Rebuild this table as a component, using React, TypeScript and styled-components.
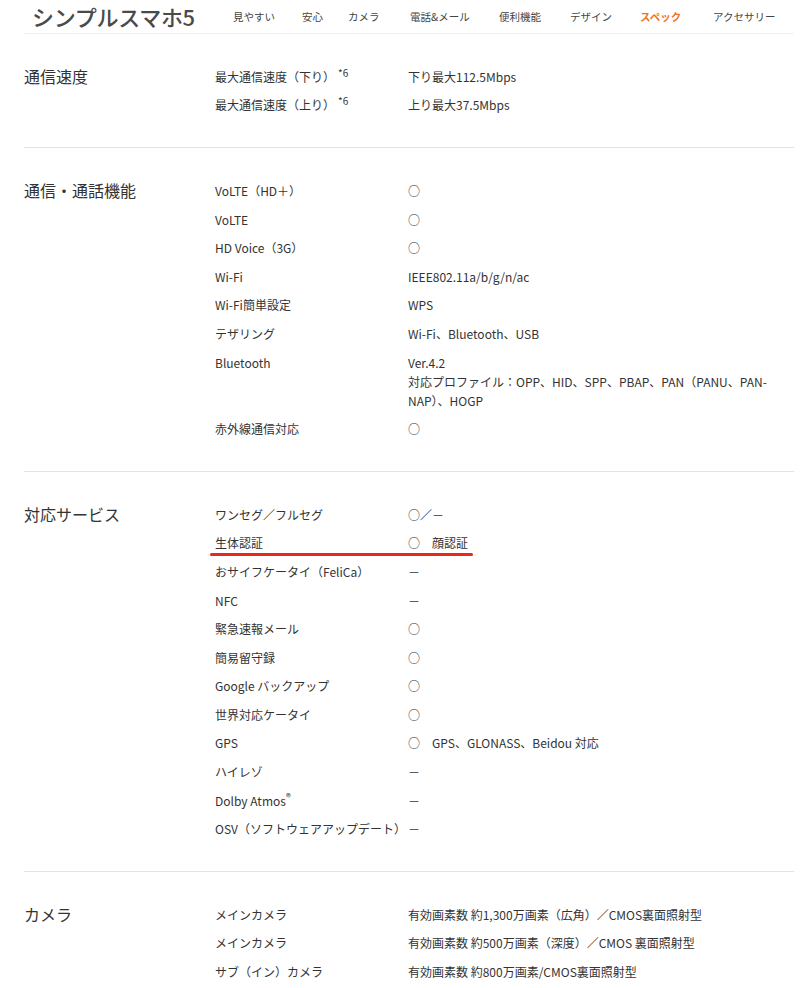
import styled, { createGlobalStyle } from 'styled-components'
import { FC, ReactNode } from 'react'

const GlobalStyle = createGlobalStyle`
  body {
    margin: 0;
    background: #ffffff;
    color: #333333;
    font-family: "Noto Sans CJK JP", "Noto Sans", sans-serif;
  }
`

const Header = styled.header`
  display: flex;
  align-items: center;
  height: 33px;
  margin: 0 8px 0 24px;
  padding-left: 8px;
  border-bottom: 1px solid #f2f2f2;
`

const Logo = styled.div`
  width: 201px;
  font-size: 22px;
  font-weight: 500;
  letter-spacing: -0.3px;
  color: #4a4a4a;
  line-height: 1;
  margin-top: -2px;
`

const Nav = styled.ul`
  display: grid;
  grid-template-columns: 69px 46px 62px 89px 71px 70px 73px auto;
  margin: 0;
  padding: 0;
  list-style: none;
`

const NavItem = styled.li<{ $active?: boolean }>`
  font-size: 10.5px;
  white-space: nowrap;
  color: ${p => (p.$active ? '#f07122' : '#444444')};
  font-weight: ${p => (p.$active ? 700 : 400)};
`

const Content = styled.main`
  margin: 0 8px 0 24px;
`

const Section = styled.section`
  display: grid;
  grid-template-columns: 191px 1fr;
  padding: 28px 0;
  border-bottom: 1px solid #e3e3e3;
`

const Heading = styled.h2`
  margin: 0;
  padding-top: 4.8px;
  font-size: 16px;
  font-weight: 400;
  line-height: 19px;
  color: #333333;
`

const Rows = styled.dl`
  margin: 0;
`

const Row = styled.div`
  position: relative;
  display: grid;
  grid-template-columns: 193px 1fr;
  padding: 4.8px 0;
  font-size: 12px;
  line-height: 19px;
`

const Label = styled.dt`
  margin: 0;
  white-space: nowrap;
`

const Value = styled.dd`
  margin: 0;
`

const Note = styled.sup<{ $gap?: number }>`
  font-size: 10px;
  line-height: 0;
  vertical-align: 5px;
  margin-left: ${p => p.$gap ?? 0}px;
`

const Mark = styled.span`
  position: absolute;
  left: -5px;
  bottom: 1px;
  width: 263px;
  height: 3px;
  border-radius: 2px;
  background: #e8291c;
`

type Spec = {
    label: ReactNode
    value: ReactNode
    marked?: boolean
}

type Group = {
    title: string
    specs: Spec[]
}

const groups: Group[] = [
    {
        title: '通信速度',
        specs: [
            { label: <>最大通信速度（下り）<Note $gap={3}>*6</Note></>, value: '下り最大112.5Mbps' },
            { label: <>最大通信速度（上り）<Note $gap={3}>*6</Note></>, value: '上り最大37.5Mbps' }
        ]
    },
    {
        title: '通信・通話機能',
        specs: [
            { label: 'VoLTE（HD＋）', value: '○' },
            { label: 'VoLTE', value: '○' },
            { label: 'HD Voice（3G）', value: '○' },
            { label: 'Wi-Fi', value: 'IEEE802.11a/b/g/n/ac' },
            { label: 'Wi-Fi簡単設定', value: 'WPS' },
            { label: 'テザリング', value: 'Wi-Fi、Bluetooth、USB' },
            {
                label: 'Bluetooth',
                value: <>Ver.4.2<br />対応プロファイル：OPP、HID、SPP、PBAP、PAN（PANU、PAN-<br />NAP）、HOGP</>
            },
            { label: '赤外線通信対応', value: '○' }
        ]
    },
    {
        title: '対応サービス',
        specs: [
            { label: 'ワンセグ／フルセグ', value: '○／－' },
            { label: '生体認証', value: '○　顔認証', marked: true },
            { label: 'おサイフケータイ（FeliCa）', value: '－' },
            { label: 'NFC', value: '－' },
            { label: '緊急速報メール', value: '○' },
            { label: '簡易留守録', value: '○' },
            { label: 'Google バックアップ', value: '○' },
            { label: '世界対応ケータイ', value: '○' },
            { label: 'GPS', value: '○　GPS、GLONASS、Beidou 対応' },
            { label: 'ハイレゾ', value: '－' },
            { label: <>Dolby Atmos<Note>®</Note></>, value: '－' },
            { label: 'OSV（ソフトウェアアップデート）', value: '－' }
        ]
    },
    {
        title: 'カメラ',
        specs: [
            { label: 'メインカメラ', value: '有効画素数 約1,300万画素（広角）／CMOS裏面照射型' },
            { label: 'メインカメラ', value: '有効画素数 約500万画素（深度）／CMOS 裏面照射型' },
            { label: 'サブ（イン）カメラ', value: '有効画素数 約800万画素/CMOS裏面照射型' }
        ]
    }
]

const navItems = ['見やすい', '安心', 'カメラ', '電話&メール', '便利機能', 'デザイン', 'スペック', 'アクセサリー']

const App: FC = () => {
    return (
        <>
            <GlobalStyle />
            <Header>
                <Logo>シンプルスマホ5</Logo>
                <Nav>
                    {navItems.map(item => (
                        <NavItem key={item} $active={item === 'スペック'}>
                            {item}
                        </NavItem>
                    ))}
                </Nav>
            </Header>
            <Content>
                {groups.map(group => (
                    <Section key={group.title}>
                        <Heading>{group.title}</Heading>
                        <Rows>
                            {group.specs.map((spec, i) => (
                                <Row key={i}>
                                    <Label>{spec.label}</Label>
                                    <Value>{spec.value}</Value>
                                    {spec.marked && <Mark />}
                                </Row>
                            ))}
                        </Rows>
                    </Section>
                ))}
            </Content>
        </>
    )
}

export default App
